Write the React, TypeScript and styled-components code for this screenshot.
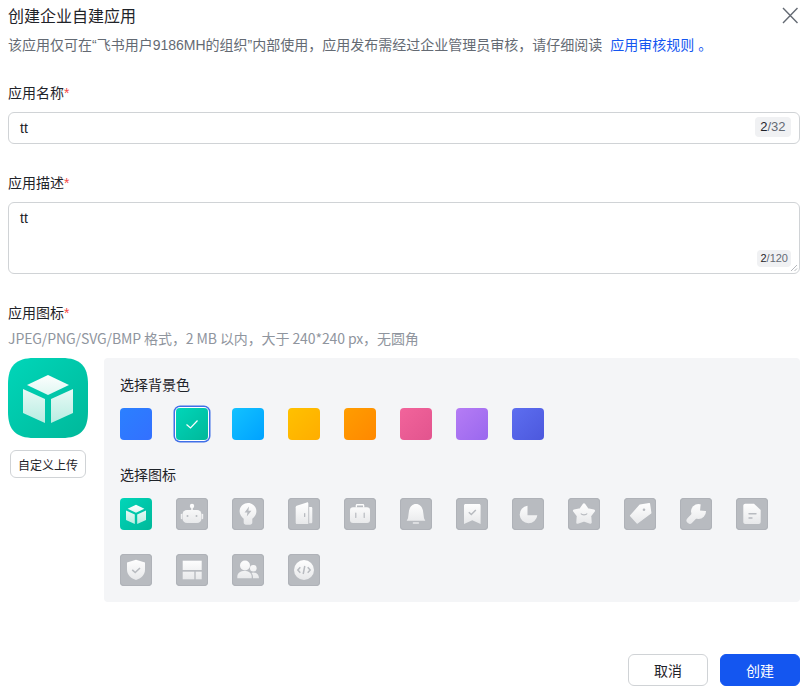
import { ReactNode } from "react";
import styled, { createGlobalStyle } from "styled-components";

const GlobalStyle = createGlobalStyle`
    html, body {
        margin: 0;
        padding: 0;
        background: #fff;
    }
    body {
        font-family: "Liberation Sans", "Noto Sans CJK SC", sans-serif;
        color: #1f2329;
    }
`;

const Dialog = styled.div`
    width: 809px;
    height: 691px;
    box-sizing: border-box;
    padding: 5px 9px 5px 8px;
    display: flex;
    flex-direction: column;
    overflow: hidden;
`;

const Header = styled.div`
    display: flex;
    justify-content: space-between;
    align-items: center;
    height: 24px;
`;

const Title = styled.h1`
    margin: 0;
    font-size: 16px;
    font-weight: 400;
    line-height: 24px;
`;

const CloseButton = styled.button`
    border: 0;
    background: none;
    padding: 0;
    width: 20px;
    height: 20px;
    color: #646a73;
    display: flex;
`;

const Notice = styled.p`
    margin: 5px 0 0;
    font-size: 14px;
    line-height: 22px;
    color: #646a73;
`;

const NoticeLink = styled.a`
    color: #1456f0;
    margin-left: 8px;
    text-decoration: none;
`;

const Field = styled.div<{ $top: number }>`
    margin-top: ${(p) => p.$top}px;
`;

const Label = styled.div`
    font-size: 14px;
    line-height: 22px;
    height: 22px;
`;

const Required = styled.span`
    color: #f54a45;
`;

const InputBox = styled.div<{ $height: number }>`
    position: relative;
    margin-top: 8px;
    height: ${(p) => p.$height}px;
    box-sizing: border-box;
    border: 1px solid #d0d3d6;
    border-radius: 6px;
    padding: 4px 11px;
    font-size: 14px;
    line-height: 22px;
`;

const Counter = styled.span<{ $size: number; $pad: number; $height: number }>`
    position: absolute;
    right: 8px;
    bottom: 6px;
    height: ${(p) => p.$height}px;
    padding: 0 ${(p) => p.$pad}px;
    border-radius: 4px;
    background: #f0f1f3;
    font-size: ${(p) => p.$size}px;
    line-height: ${(p) => p.$height}px;
    color: #646a73;
`;

const CounterCurrent = styled.span`
    color: #1f2329;
`;

const Grip = styled.svg`
    position: absolute;
    right: 1px;
    bottom: 1px;
    width: 8px;
    height: 8px;
    color: #b5b8bd;
`;

const Hint = styled.div`
    margin-top: 3px;
    font-family: "Noto Sans CJK SC", sans-serif;
    font-size: 14px;
    line-height: 22px;
    letter-spacing: -0.1px;
    color: #8f959e;
`;

const IconArea = styled.div`
    margin-top: 9px;
    display: flex;
    gap: 16px;
`;

const PreviewColumn = styled.div`
    width: 80px;
    display: flex;
    flex-direction: column;
    align-items: center;
    gap: 12px;
`;

const Preview = styled.svg`
    width: 80px;
    height: 80px;
    display: block;
`;

const UploadButton = styled.button`
    width: 76px;
    height: 28px;
    padding: 0;
    box-sizing: border-box;
    background: #fff;
    border: 1px solid #d0d3d6;
    border-radius: 6px;
    font: inherit;
    font-size: 12px;
    color: #1f2329;
`;

const Panel = styled.div`
    flex: 1;
    height: 244px;
    box-sizing: border-box;
    padding: 16px;
    background: #f4f5f7;
    border-radius: 4px;
`;

const PanelTitle = styled.div<{ $top?: number }>`
    margin-top: ${(p) => p.$top ?? 0}px;
    font-size: 14px;
    line-height: 22px;
    height: 22px;
`;

const SwatchRow = styled.div`
    margin-top: 12px;
    display: flex;
    gap: 24px;
`;

const Swatch = styled.div<{ $from: string; $to: string; $selected?: boolean }>`
    width: 32px;
    height: 32px;
    border-radius: 4px;
    background: linear-gradient(135deg, ${(p) => p.$from}, ${(p) => p.$to});
    display: flex;
    align-items: center;
    justify-content: center;
    box-shadow: ${(p) => (p.$selected ? "0 0 0 1px #fff, 0 0 0 2.5px #3f6fe8" : "none")};
`;

const IconGrid = styled.div`
    margin-top: 12px;
    display: grid;
    grid-template-columns: repeat(12, 32px);
    column-gap: 24px;
    row-gap: 24px;
`;

const IconTile = styled.div<{ $active?: boolean }>`
    width: 32px;
    height: 32px;
    border-radius: 4px;
    background: ${(p) =>
        p.$active ? "linear-gradient(135deg, #00d6b9, #00b89a)" : "#b8bbc0"};
    box-shadow: ${(p) => (p.$active ? "none" : "inset 0 0 0 1px #afb2b8")};
`;

const TileSvg = styled.svg`
    width: 32px;
    height: 32px;
    display: block;
`;

const Footer = styled.div`
    margin-top: auto;
    display: flex;
    justify-content: flex-end;
    gap: 12px;
`;

const FooterButton = styled.button<{ $primary?: boolean }>`
    width: 80px;
    height: 32px;
    padding: 0;
    box-sizing: border-box;
    border-radius: 6px;
    font: inherit;
    font-size: 14px;
    border: 1px solid ${(p) => (p.$primary ? "#1456f0" : "#d0d3d6")};
    background: ${(p) => (p.$primary ? "#1456f0" : "#fff")};
    color: ${(p) => (p.$primary ? "#fff" : "#1f2329")};
`;

const swatches = [
    ["#2b80ff", "#3370ff"],
    ["#00d6b9", "#00b89a"],
    ["#12c2ff", "#00a2ff"],
    ["#ffc100", "#ffad00"],
    ["#ff9d00", "#ff8800"],
    ["#f2649b", "#e2548e"],
    ["#b57cf5", "#9a68ee"],
    ["#5d6ef0", "#4c58dd"],
];

const W = "url(#tileFill)";
const G = "#b8bbc0";

const Cube = ({ fill, size = 32 }: { fill: string; size?: number }) => (
    <g transform={`scale(${size / 32})`}>
        <path d="M16 6.8 24.4 10.8 16 14.8 7.600 10.8Z" fill={fill} />
        <path d="M6 12.400 14.800 16.400V26L6 22Z" fill={fill} />
        <path d="M26 12.400 17.200 16.400V26L26 22Z" fill={fill} />
    </g>
);

const tiles: ReactNode[] = [
    <Cube fill="url(#cubeFill)" />,
    <>
        <rect x="15.200" y="8" width="1.600" height="5" fill={W} />
        <circle cx="16" cy="8" r="2.200" fill={W} />
        <rect x="6.500" y="12" width="19" height="13" rx="4.500" fill={W} />
        <rect x="4.800" y="15.700" width="1.400" height="5.500" rx=".7" fill={W} />
        <rect x="25.800" y="15.700" width="1.400" height="5.500" rx=".7" fill={W} />
        <circle cx="11.500" cy="18" r="1" fill={G} />
        <circle cx="20.500" cy="18" r="1" fill={G} />
    </>,
    <>
        <path d="M16 5C20.600 5 24.400 8.700 24.400 13.300 24.400 16.500 22.500 19.100 20.300 20.700V24.500C20.300 25.800 19.300 26.700 18 26.700H14C12.700 26.700 11.700 25.800 11.700 24.500V20.700C9.500 19.100 7.600 16.500 7.600 13.300 7.600 8.700 11.400 5 16 5Z" fill={W} />
        <path d="M17 8.500 12.600 14.500H15.400L14.800 18.500 19.400 12.700H16.400Z" fill={G} />
    </>,
    <>
        <path d="M7.700 9.300C7.700 8.600 8.100 8.100 8.700 7.800L18.800 4.400C19.600 4.200 20.300 4.700 20.300 5.500V26H9C8.300 26 7.700 25.400 7.700 24.700Z" fill={W} />
        <path d="M21.200 9H23C23.800 9 24.300 9.500 24.300 10.300V24C24.300 24.800 23.800 25.300 23 25.300H21.200Z" fill={W} />
        <rect x="16" y="15" width="1.300" height="4" rx=".6" fill={G} />
    </>,
    <>
        <path d="M11.700 9.500V7.500C11.700 6.600 12.300 6 13.200 6H18.800C19.700 6 20.300 6.600 20.300 7.500V9.500H19V7.400H13V9.500Z" fill={W} />
        <rect x="6" y="9.300" width="20" height="15.700" rx="3" fill={W} />
        <rect x="11.200" y="14.500" width="1.200" height="5.500" rx=".6" fill={G} />
        <rect x="19.600" y="14.500" width="1.200" height="5.500" rx=".6" fill={G} />
    </>,
    <>
        <path d="M16 6C20.500 6 23 10 23.300 15L24 20.300 25.300 22.700H6.700L8 20.300 8.700 15C9 10 11.500 6 16 6Z" fill={W} />
        <rect x="12.700" y="24.300" width="6.400" height="1.500" rx=".7" fill={W} />
    </>,
    <>
        <path d="M9.500 6H23C23.900 6 24.600 6.700 24.600 7.600V26L16.300 22.300 8 26V7.600C8 6.700 8.600 6 9.500 6Z" fill={W} />
        <path d="M12.800 14.200 15.300 16.500 19.800 12" fill="none" stroke={G} strokeWidth="1.500" />
    </>,
    <>
        <path d="M15.500 7.800A8.800 8.800 0 1 0 25.300 17.300L15.500 17.300Z" fill={W} />
    </>,
    <>
        <path d="M16 6.500 19.500 11.500 25.800 12.800 22 17.800 22.500 24.500 16 22.300 9.500 24.500 10 17.800 6.200 12.800 12.500 11.500Z" fill={W} stroke={W} strokeWidth="2.500" strokeLinejoin="round" />
        <path d="M12.800 15.500C14 17.300 18 17.300 19.200 15.500" fill="none" stroke={G} strokeWidth="1.100" />
    </>,
    <>
        <path d="M16 7.300 25.300 5.700 26.700 15 13.300 25 6.700 17.700Z" fill={W} stroke={W} strokeWidth="1.500" strokeLinejoin="round" />
        <circle cx="20" cy="11.700" r="1.300" fill={G} />
    </>,
    <>
        <path d="M9.800 22.500 17 15" stroke={W} strokeWidth="6.500" strokeLinecap="round" fill="none" />
        <circle cx="18.500" cy="13.500" r="7.500" fill={W} />
        <path d="M20 12.500 21 4H28V13.300Z" fill={G} />
    </>,
    <>
        <path d="M7.300 7.700C7.300 6.500 8.200 5.700 9.300 5.700H18L24.700 12V24C24.700 25.200 23.800 26 22.700 26H9.300C8.200 26 7.300 25.200 7.300 24Z" fill={W} />
        <rect x="12.300" y="15" width="8.400" height="1.500" rx=".7" fill={G} />
        <rect x="12.300" y="19.300" width="4.400" height="1.500" rx=".7" fill={G} />
    </>,
    <>
        <path d="M16 5.700 25 8.500V15.500C25 21 21 24.500 16 26 11 24.500 7 21 7 15.500V8.500Z" fill={W} />
        <path d="M12.200 15.800 15.200 18.500 20 14" fill="none" stroke={G} strokeWidth="1.600" />
    </>,
    <>
        <rect x="6.700" y="6.700" width="19" height="9.300" fill={W} />
        <rect x="6.700" y="17.700" width="11.600" height="7.600" fill={W} />
        <rect x="19.700" y="17.700" width="6" height="7.600" fill={W} />
    </>,
    <>
        <circle cx="13" cy="11.500" r="5" fill={W} />
        <path d="M5.300 24.300V22.500C5.300 19 8.500 17 12.500 17S19.700 19 19.700 22.500V24.300Z" fill={W} />
        <circle cx="21.300" cy="14.300" r="3.300" fill={W} />
        <path d="M21 18.500C24.500 18.500 27 20.500 27 24.300H21C21 22.500 20.800 20.500 19.500 19Z" fill={W} />
    </>,
    <>
        <circle cx="16" cy="16" r="10" fill={W} />
        <path d="M12.300 13.200 9.800 16 12.300 18.800M19.700 13.200 22.200 16 19.700 18.800M16.800 12 15.200 20" fill="none" stroke={G} strokeWidth="1.500" />
    </>,
];

const TileDefs = () => (
    <svg width="0" height="0" style={{ position: "absolute" }}>
        <defs>
            <linearGradient id="tileFill" gradientUnits="userSpaceOnUse" x1="0" y1="5" x2="0" y2="27">
                <stop offset="0" stopColor="#fff" />
                <stop offset="1" stopColor="#e6e7e9" />
            </linearGradient>
            <linearGradient id="cubeFill" gradientUnits="userSpaceOnUse" x1="0" y1="6" x2="0" y2="27">
                <stop offset="0" stopColor="#fff" />
                <stop offset="1" stopColor="#b4ece0" />
            </linearGradient>
            <linearGradient id="appBg" x1="0" y1="0" x2="1" y2="1">
                <stop offset="0" stopColor="#00d6b9" />
                <stop offset="1" stopColor="#00b89a" />
            </linearGradient>
        </defs>
    </svg>
);

export default function App() {
    return (
        <>
            <GlobalStyle />
            <TileDefs />
            <Dialog>
                <Header>
                    <Title>创建企业自建应用</Title>
                    <CloseButton aria-label="关闭">
                        <svg viewBox="0 0 20 20" width="20" height="20">
                            <path d="M3 1 17.500 16M17.500 1 3 16" stroke="currentColor" strokeWidth="1.400" fill="none" />
                        </svg>
                    </CloseButton>
                </Header>
                <Notice>
                    该应用仅可在“飞书用户9186MH的组织”内部使用，应用发布需经过企业管理员审核，请仔细阅读
                    <NoticeLink href="#">应用审核规则 。</NoticeLink>
                </Notice>

                <Field $top={26}>
                    <Label>应用名称<Required>*</Required></Label>
                    <InputBox $height={32}>
                        tt
                        <Counter $size={13} $pad={5.5} $height={20}>
                            <CounterCurrent>2</CounterCurrent>/32
                        </Counter>
                    </InputBox>
                </Field>

                <Field $top={28}>
                    <Label>应用描述<Required>*</Required></Label>
                    <InputBox $height={72}>
                        tt
                        <Counter $size={11} $pad={3} $height={17}>
                            <CounterCurrent>2</CounterCurrent>/120
                        </Counter>
                        <Grip viewBox="0 0 8 8">
                            <path d="M1 7 7 1M4.500 7 7 4.500" stroke="currentColor" strokeWidth="1" fill="none" />
                        </Grip>
                    </InputBox>
                </Field>

                <Field $top={28}>
                    <Label>应用图标<Required>*</Required></Label>
                    <Hint>JPEG/PNG/SVG/BMP 格式，2 MB 以内，大于 240*240 px，无圆角</Hint>
                    <IconArea>
                        <PreviewColumn>
                            <Preview viewBox="0 0 80 80">
                                <path
                                    d="M26 0H54C72 0 80 8 80 26V54C80 72 72 80 54 80H26C8 80 0 72 0 54V26C0 8 8 0 26 0Z"
                                    fill="url(#appBg)"
                                />
                                <Cube fill="url(#cubeFill)" size={80} />
                            </Preview>
                            <UploadButton>自定义上传</UploadButton>
                        </PreviewColumn>
                        <Panel>
                            <PanelTitle>选择背景色</PanelTitle>
                            <SwatchRow>
                                {swatches.map(([from, to], i) => (
                                    <Swatch key={from} $from={from} $to={to} $selected={i === 1}>
                                        {i === 1 && (
                                            <svg viewBox="0 0 14 14" width="14" height="14">
                                                <path d="M1.500 7.500 5.500 11 12.500 3.500" stroke="#fff" strokeWidth="1.200" fill="none" />
                                            </svg>
                                        )}
                                    </Swatch>
                                ))}
                            </SwatchRow>
                            <PanelTitle $top={24}>选择图标</PanelTitle>
                            <IconGrid>
                                {tiles.map((tile, i) => (
                                    <IconTile key={i} $active={i === 0}>
                                        <TileSvg viewBox="0 0 32 32">{tile}</TileSvg>
                                    </IconTile>
                                ))}
                            </IconGrid>
                        </Panel>
                    </IconArea>
                </Field>

                <Footer>
                    <FooterButton>取消</FooterButton>
                    <FooterButton $primary>创建</FooterButton>
                </Footer>
            </Dialog>
        </>
    );
}
